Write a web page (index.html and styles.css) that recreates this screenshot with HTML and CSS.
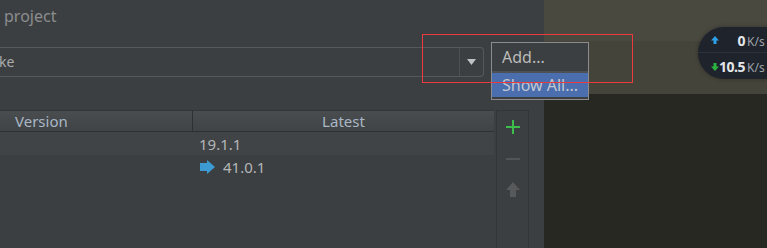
FILE: index.html
```html
<!DOCTYPE html>
<html>
<head>
  <title>Library Dependency</title>
  <link rel="stylesheet" href="styles.css">
</head>
<body>
  <div class="screen">
    <div class="dialog">
      <div class="title">project</div>

      <div class="combo-row">
        <div class="combo">
          <div class="combo-field">ke</div>
          <div class="combo-button">
            <svg width="9" height="6" viewBox="0 0 9 6"><path d="M0 0 H9 L4.5 6 Z" fill="#bfc1c3"/></svg>
          </div>
        </div>
      </div>

      <div class="table-area">
        <div class="table">
          <div class="table-head">
            <div class="col-version">Version</div>
            <div class="col-latest">Latest</div>
          </div>
          <div class="table-row striped">
            <div class="col-version"></div>
            <div class="cell-latest">19.1.1</div>
          </div>
          <div class="table-row">
            <div class="col-version"></div>
            <div class="cell-latest">
              <svg class="update-icon" width="15" height="14" viewBox="0 0 15 14">
                <path d="M0 3 H7 V0 L15 7 L7 14 V11 H0 Z" fill="#3d9bd3"/>
              </svg>
              41.0.1
            </div>
          </div>
        </div>

        <div class="toolbar">
          <div class="tool-btn">
            <svg width="14" height="14" viewBox="0 0 14 14"><path d="M6 0 H8 V6 H14 V8 H8 V14 H6 V8 H0 V6 H6 Z" fill="#3cbd4c"/></svg>
          </div>
          <div class="tool-btn">
            <svg width="14" height="2" viewBox="0 0 14 2"><rect width="14" height="2" fill="#525557"/></svg>
          </div>
          <div class="tool-btn">
            <svg width="14" height="15" viewBox="0 0 14 15"><path d="M7 0 L14 8 H10 V15 H4 V8 H0 Z" fill="#57595b"/></svg>
          </div>
        </div>
      </div>
    </div>

    <div class="backdrop">
      <div class="band-top"></div>
      <div class="band-mid"></div>
      <div class="band-bottom"></div>
    </div>

    <div class="popup">
      <div class="popup-item">Add...</div>
      <div class="popup-sep"></div>
      <div class="popup-item selected">Show All...</div>
    </div>

    <div class="highlight"></div>

    <div class="speed">
      <div class="speed-row up">
        <svg width="8" height="8" viewBox="0 0 8 8"><path d="M4 0 L8 4.5 H5.5 V8 H2.5 V4.5 H0 Z" fill="#2e9fe6"/></svg>
        <span class="speed-value">0</span><span class="speed-unit">K/s</span>
      </div>
      <div class="speed-row">
        <svg width="8" height="8" viewBox="0 0 8 8"><path d="M4 8 L8 3.5 H5.5 V0 H2.5 V3.5 H0 Z" fill="#2bb540"/></svg>
        <span class="speed-value">10.5</span><span class="speed-unit">K/s</span>
      </div>
    </div>
  </div>
</body>
</html>
```

FILE: styles.css
```css
body {
  margin: 0;
  font-family: "Noto Sans", "Open Sans", sans-serif;
  background-color: #282823;
  overflow: hidden;
}

.screen {
  position: relative;
  display: flex;
  width: 767px;
  height: 248px;
  overflow: hidden;
}

.dialog {
  width: 544px;
  display: flex;
  flex-direction: column;
  background-color: #3c3f41;
}

.title {
  height: 47px;
  box-sizing: border-box;
  padding: 6px 0 0 4px;
  font-size: 16px;
  line-height: 20px;
  color: #8b8d8f;
}

.combo-row {
  display: flex;
  height: 30px;
}

.combo {
  width: 484px;
  display: flex;
  box-sizing: border-box;
  border: 1px solid #56595b;
  border-left: none;
  border-radius: 0 4px 4px 0;
}

.combo-field {
  flex: 1;
  margin-left: -1px;
  padding-top: 3px;
  font-size: 14px;
  line-height: 22px;
  color: #a9abad;
}

.combo-button {
  width: 23px;
  border-left: 1px solid #4d5052;
  display: flex;
  align-items: center;
  justify-content: center;
}

.table-area {
  display: flex;
  flex: 1;
  margin-top: 33px;
}

.table {
  width: 494px;
  margin-right: 2px;
}

.table-head {
  display: flex;
  height: 22px;
  box-sizing: border-box;
  border-top: 1px solid #333537;
  border-bottom: 1px solid #2e3032;
  background: linear-gradient(#4a4d4f, #404345);
  font-size: 15px;
  line-height: 21px;
  color: #a9b7c6;
}

.col-version {
  width: 193px;
  box-sizing: border-box;
  padding-left: 15px;
  border-right: 1px solid #2e3032;
}

.table-row .col-version {
  border-right: none;
  width: 194px;
}

.col-latest {
  flex: 1;
  text-align: center;
}

.table-row {
  display: flex;
  height: 23px;
  font-size: 15px;
  line-height: 23px;
  color: #b4b6b8;
}

.table-row.striped {
  background-color: #414446;
}

.cell-latest {
  display: flex;
  align-items: center;
  padding-left: 5px;
  padding-top: 1px;
}

.update-icon {
  margin: 0 8px 0 1px;
}

.toolbar {
  width: 33px;
  box-sizing: border-box;
  border: 1px solid #333537;
  border-bottom: none;
  display: flex;
  flex-direction: column;
}

.tool-btn {
  height: 32px;
  display: flex;
  align-items: center;
  justify-content: center;
}

.tool-btn:last-child {
  margin-top: -2px;
}

.backdrop {
  flex: 1;
  display: flex;
  flex-direction: column;
  box-shadow: inset 8px 0 8px -5px rgba(0, 0, 0, 0.45);
}

.band-top {
  height: 41px;
  background-color: #4a4940;
}

.band-mid {
  height: 53px;
  background-color: #45443a;
}

.band-bottom {
  flex: 1;
  background-color: #282823;
}

.popup {
  position: absolute;
  left: 491px;
  top: 42px;
  width: 98px;
  height: 58px;
  box-sizing: border-box;
  border: 1px solid #8c8c8c;
  background-color: #3c3f41;
  font-size: 16px;
  color: #bbbbbb;
}

.popup-item {
  height: 28px;
  line-height: 28px;
  padding-left: 10px;
}

.popup-item.selected {
  height: 24px;
  line-height: 24px;
  background-color: #4b6eaf;
  color: #c2c7cf;
}

.popup-sep {
  height: 2px;
  background-color: #4e5153;
}

.highlight {
  position: absolute;
  left: 422px;
  top: 34px;
  width: 211px;
  height: 49px;
  box-sizing: border-box;
  border: 1px solid #ec3a3f;
}

.speed {
  position: absolute;
  left: 698px;
  top: 27px;
  width: 110px;
  height: 52px;
  border-radius: 26px;
  background-color: #1f232b;
  box-shadow: 0 0 4px rgba(0, 0, 0, 0.3);
}

.speed-row {
  display: flex;
  align-items: baseline;
  height: 26px;
  box-sizing: border-box;
  padding: 4px 0 0 13px;
}

.speed-row.up {
  border-bottom: 1px solid #2c313a;
}

.speed-row svg {
  align-self: center;
  margin-top: -3px;
}

.speed-value {
  width: 26px;
  text-align: right;
  font-size: 14px;
  font-weight: bold;
  letter-spacing: -0.5px;
  color: #e4e6ea;
}

.speed-unit {
  margin-left: 2px;
  font-size: 12px;
  color: #9ea3aa;
}
```
